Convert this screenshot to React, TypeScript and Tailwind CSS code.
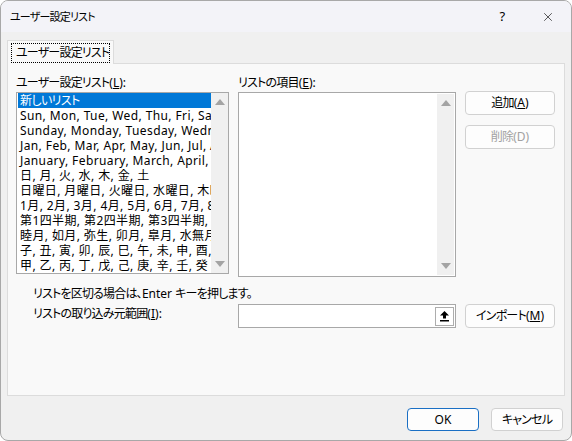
import React from 'react';
import { X } from 'lucide-react';

const FONT = { fontFamily: '"Noto Sans", "Noto Sans CJK JP", sans-serif' };

const customLists = [
  '新しいリスト',
  'Sun, Mon, Tue, Wed, Thu, Fri, Sat',
  'Sunday, Monday, Tuesday, Wednesday, Thursday',
  'Jan, Feb, Mar, Apr, May, Jun, Jul, Aug',
  'January, February, March, April, May',
  '日, 月, 火, 水, 木, 金, 土',
  '日曜日, 月曜日, 火曜日, 水曜日, 木曜日',
  '1月, 2月, 3月, 4月, 5月, 6月, 7月, 8月',
  '第1四半期, 第2四半期, 第3四半期, 第4四半期',
  '睦月, 如月, 弥生, 卯月, 皐月, 水無月',
  '子, 丑, 寅, 卯, 辰, 巳, 午, 未, 申, 酉, 戌, 亥',
  '甲, 乙, 丙, 丁, 戊, 己, 庚, 辛, 壬, 癸',
];

const ArrowUp = () => (
  <svg width="10" height="6" viewBox="0 0 10 6">
    <path d="M0 6 L5 0 L10 6 Z" fill="#a3a3a3" />
  </svg>
);

const ArrowDown = () => (
  <svg width="10" height="6" viewBox="0 0 10 6">
    <path d="M0 0 L10 0 L5 6 Z" fill="#a3a3a3" />
  </svg>
);

// vertical scrollbar with only the arrow glyphs
const ScrollBar: React.FC<{ width: string }> = ({ width }) => (
  <div className={`${width} h-full bg-[#f0f0f0] flex flex-col items-center justify-between py-[6px]`}>
    <ArrowUp />
    <ArrowDown />
  </div>
);

// latin part of a label, with its access key underlined
const Key: React.FC<{ k: string; colon?: boolean }> = ({ k, colon }) => (
  <span className="tracking-normal">
    (<span className="underline">{k}</span>){colon ? ':' : ''}
  </span>
);

const Button: React.FC<{ label: React.ReactNode; disabled?: boolean; primary?: boolean; className?: string }> = ({
  label,
  disabled,
  primary,
  className = '',
}) => (
  <button
    type="button"
    className={`flex items-center justify-center rounded-[4px] border bg-[#fdfdfd] text-[12px] leading-none ${
      primary ? 'border-[#1a6fc4]' : 'border-[#d1d1d1]'
    } ${disabled ? 'text-[#a2a2a2]' : 'text-black'} ${className}`}
  >
    {label}
  </button>
);

const App: React.FC = () => {
  return (
    <div className="w-[572px] h-[441px] bg-white [font-feature-settings:'palt']" style={FONT}>
      <div className="w-full h-full rounded-[8px] border border-[#a8a8a8] overflow-hidden bg-[#f0f0f0] flex flex-col text-black text-[12px] tracking-[-0.8px]">
        {/* title bar */}
        <div className="h-[31px] shrink-0 bg-[#f3f3f8] flex items-center">
          <span className="ml-[9px] text-[11px] leading-none">ユーザー設定リスト</span>
          <span className="ml-auto w-[46px] text-center text-[13px] leading-none">?</span>
          <span className="w-[46px] flex justify-center">
            <X size={14} strokeWidth={1.1} />
          </span>
        </div>

        {/* tabs */}
        <div className="px-[6px] pt-[8px] flex flex-col">
          <div className="flex">
            <div className="h-[24px] w-[107px] border border-b-0 border-[#dcdcdc] bg-[#f9f9f9] flex items-center justify-center -mb-px relative z-10">
              <span className="w-[99px] h-[20px] leading-[18px] pl-[4px] whitespace-nowrap border border-dotted border-black">
                ユーザー設定リスト
              </span>
            </div>
          </div>
          <div className="h-[333px] border border-[#dcdcdc] bg-[#f9f9f9] pl-[8px] pt-[11px] flex flex-col">
            <div className="flex">
              {/* custom lists */}
              <div className="w-[213px] flex flex-col">
                <div className="h-[15px] leading-[15px] mb-[2px]">
                  ユーザー設定リスト<Key k="L" colon />
                </div>
                <div className="h-[182px] border border-[#a8a8a8] bg-white flex pl-px">
                  <div className="flex-1 overflow-hidden tracking-[0.4px]">
                    {customLists.map((item, i) => (
                      <div
                        key={i}
                        className={`h-[15px] leading-[15px] whitespace-nowrap overflow-hidden pl-[2px] ${
                          i === 0 ? 'bg-[#0078d7] text-white tracking-[-0.6px]' : ''
                        }`}
                      >
                        {item}
                      </div>
                    ))}
                  </div>
                  <ScrollBar width="w-[17px]" />
                </div>
              </div>

              {/* list entries */}
              <div className="ml-[9px] w-[218px] flex flex-col">
                <div className="h-[15px] leading-[15px] mb-[2px]">
                  リストの項目<Key k="E" colon />
                </div>
                <div className="h-[185px] border border-[#a8a8a8] bg-white flex justify-end p-px">
                  <ScrollBar width="w-[17px]" />
                </div>
              </div>

              <div className="ml-[9px] pt-[16px] flex flex-col gap-[10px]">
                <Button className="w-[90px] h-[24px]" label={<>追加<Key k="A" /></>} />
                <Button
                  className="w-[90px] h-[24px]"
                  disabled
                  label={<>削除<span className="tracking-normal">(D)</span></>}
                />
              </div>
            </div>

            <div className="mt-[9px] pl-[17px] h-[15px] leading-[15px]">
              リストを区切る場合は、<span className="tracking-normal">Enter </span>キーを押します。
            </div>

            <div className="mt-[3px] flex items-center">
              <div className="w-[222px] pl-[17px] leading-[15px] -mt-[5px]">
                リストの取り込み元範囲<Key k="I" colon />
              </div>
              <div className="w-[218px] h-[24px] border border-[#a8a8a8] bg-white flex items-center justify-end pr-[1px]">
                <div className="w-[19px] h-[19px] border border-[#adadad] bg-white flex items-center justify-center">
                  <svg width="9" height="11" viewBox="0 0 9 11">
                    <path d="M4.5 0 L9 4.5 L6 4.5 L6 7.5 L3 7.5 L3 4.5 L0 4.5 Z" fill="#000" />
                    <rect x="0" y="9" width="9" height="1.5" fill="#000" />
                  </svg>
                </div>
              </div>
              <Button className="ml-[9px] w-[90px] h-[24px]" label={<>インポート<Key k="M" /></>} />
            </div>
          </div>
        </div>

        {/* footer */}
        <div className="flex justify-end gap-[12px] pr-[8px] pt-[12px]">
          <Button primary className="w-[72px] h-[23px] tracking-normal" label="OK" />
          <Button className="w-[72px] h-[23px]" label="キャンセル" />
        </div>
      </div>
    </div>
  );
};

export default App;
